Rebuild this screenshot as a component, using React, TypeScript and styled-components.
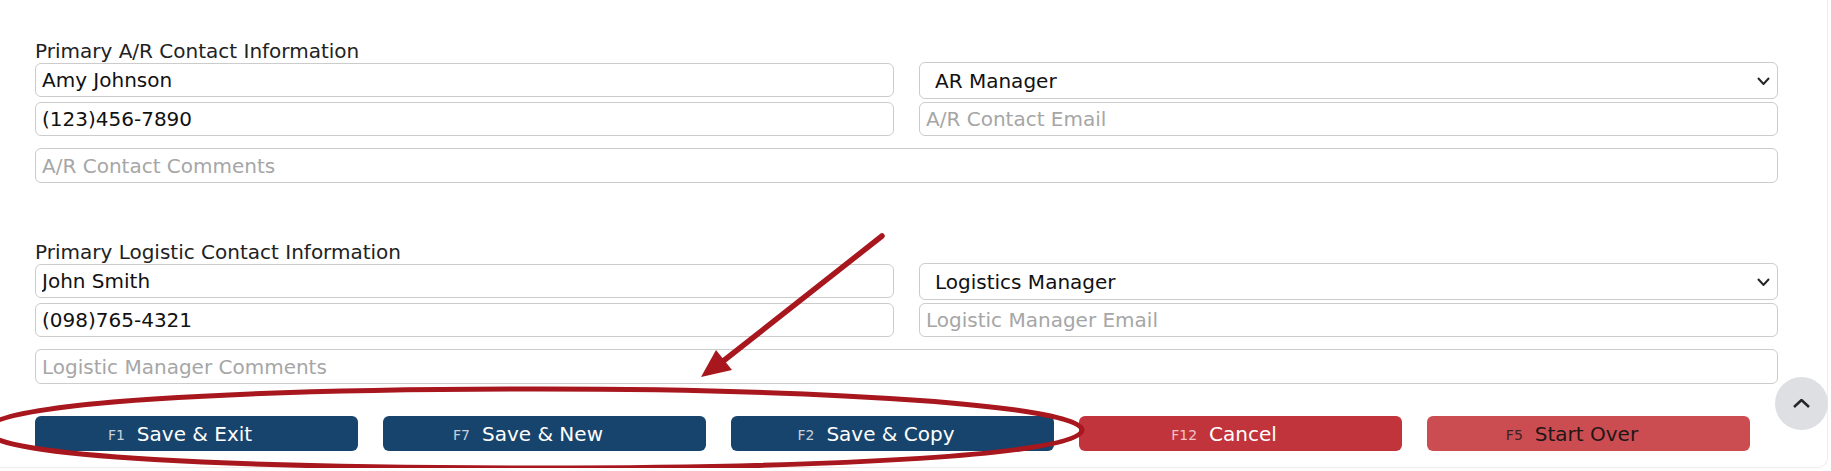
import { FC } from "react";
import styled, { createGlobalStyle } from "styled-components";

// ----------------------------------------------------------------------------

const GlobalStyle = createGlobalStyle`
  html, body {
    margin: 0;
    padding: 0;
    background: #ffffff;
    overflow: hidden;
  }
  body {
    font-family: "DejaVu Sans", Verdana, "Liberation Sans", sans-serif;
    color: #1a1a1a;
  }
`;

const FONT_SIZE = "20px";

// ----------------------------------------------------------------------------

const Page = styled.div`
  position: relative;
  box-sizing: border-box;
  width: 1828px;
  height: 468px;
  padding: 40px 49px 0 35px;
  border-right: 1px solid #f4ebe9;
  border-bottom: 1px solid #f4ebe9;
  border-bottom-right-radius: 10px;
`;

const Section = styled.section<{ $gapAfter: number }>`
  display: flex;
  flex-direction: column;
  margin-bottom: ${({ $gapAfter }) => $gapAfter}px;
`;

const SectionLabel = styled.div`
  font-size: ${FONT_SIZE};
  line-height: 22px;
  color: #222222;
`;

const FieldGrid = styled.div`
  display: grid;
  grid-template-columns: 1fr 1fr;
  column-gap: 25px;
  row-gap: 3px;
  align-items: start;
`;

const TextInput = styled.input<{ $offset?: number }>`
  box-sizing: border-box;
  width: 100%;
  height: 34px;
  margin: ${({ $offset }) => $offset ?? 0}px 0 0 0;
  padding: 0 6px;
  border: 1px solid #cccccc;
  border-radius: 6px;
  background: #ffffff;
  font-family: inherit;
  font-size: ${FONT_SIZE};
  color: #111111;
  outline: none;

  &::placeholder {
    color: #a6a6a6;
  }
`;

const CommentInput = styled(TextInput)`
  height: 35px;
  margin-top: 12px;
`;

const SelectWrap = styled.div`
  position: relative;
  height: 37px;

  svg {
    position: absolute;
    right: 8px;
    top: 15px;
    pointer-events: none;
  }
`;

const Select = styled.select`
  box-sizing: border-box;
  width: 100%;
  height: 37px;
  padding: 0 40px 0 15px;
  border: 1px solid #cccccc;
  border-radius: 6px;
  background: #ffffff;
  appearance: none;
  font-family: inherit;
  font-size: ${FONT_SIZE};
  color: #111111;
  outline: none;
`;

const ButtonRow = styled.div`
  display: flex;
  gap: 25px;
`;

type Tone = "primary" | "danger" | "muted";

const toneColors: Record<Tone, { bg: string; fg: string; key: string }> = {
  primary: { bg: "#17446c", fg: "#ffffff", key: "#c8d0da" },
  danger: { bg: "#c2343b", fg: "#ffffff", key: "#efc3c5" },
  muted: { bg: "#cb4d51", fg: "#1e1617", key: "#3b2224" },
};

const ActionButton = styled.button<{ $tone: Tone }>`
  box-sizing: border-box;
  width: 323px;
  height: 35px;
  display: flex;
  align-items: center;
  justify-content: center;
  gap: 12px;
  padding: 0 33px 0 0;
  border: none;
  border-radius: 6px;
  background: ${({ $tone }) => toneColors[$tone].bg};
  color: ${({ $tone }) => toneColors[$tone].fg};
  font-family: inherit;
  font-size: ${FONT_SIZE};
  cursor: pointer;

  .key {
    font-size: 14px;
    margin-top: 3px;
    color: ${({ $tone }) => toneColors[$tone].key};
  }
`;

const ScrollTop = styled.button`
  position: absolute;
  left: 1775px;
  top: 377px;
  width: 53px;
  height: 53px;
  border: none;
  border-radius: 50%;
  background: #dddfe3;
  display: flex;
  align-items: center;
  justify-content: center;
  padding: 0;
`;

const Annotation = styled.svg`
  position: absolute;
  left: 0;
  top: 0;
  pointer-events: none;
`;

// ----------------------------------------------------------------------------

const Chevron: FC<{ up?: boolean; w: number; h: number; stroke: number }> = ({
  up,
  w,
  h,
  stroke,
}) => (
  <svg width={w} height={h} viewBox={`0 0 ${w} ${h}`}>
    <polyline
      points={
        up
          ? `1,${h - 1} ${w / 2},1 ${w - 1},${h - 1}`
          : `1,1 ${w / 2},${h - 1} ${w - 1},1`
      }
      fill="none"
      stroke="#262626"
      strokeWidth={stroke}
    />
  </svg>
);

interface ContactBlockProps {
  title: string;
  name: string;
  role: string;
  phone: string;
  emailPlaceholder: string;
  commentsPlaceholder: string;
  gapAfter: number;
}

const ContactBlock: FC<ContactBlockProps> = (props) => {
  const { title, name, role, phone, emailPlaceholder, commentsPlaceholder, gapAfter } =
    props;

  return (
    <Section $gapAfter={gapAfter}>
      <SectionLabel>{title}</SectionLabel>
      <FieldGrid>
        <TextInput $offset={1} defaultValue={name} />
        <SelectWrap>
          <Select defaultValue={role}>
            <option>{role}</option>
          </Select>
          <Chevron w={13} h={8} stroke={2} />
        </SelectWrap>
        <TextInput defaultValue={phone} />
        <TextInput placeholder={emailPlaceholder} />
      </FieldGrid>
      <CommentInput placeholder={commentsPlaceholder} />
    </Section>
  );
};

const actions: { key: string; label: string; tone: Tone }[] = [
  { key: "F1", label: "Save & Exit", tone: "primary" },
  { key: "F7", label: "Save & New", tone: "primary" },
  { key: "F2", label: "Save & Copy", tone: "primary" },
  { key: "F12", label: "Cancel", tone: "danger" },
  { key: "F5", label: "Start Over", tone: "muted" },
];

const App: FC = () => {
  return (
    <>
      <GlobalStyle />
      <Page>
        <ContactBlock
          title="Primary A/R Contact Information"
          name="Amy Johnson"
          role="AR Manager"
          phone="(123)456-7890"
          emailPlaceholder="A/R Contact Email"
          commentsPlaceholder="A/R Contact Comments"
          gapAfter={58}
        />
        <ContactBlock
          title="Primary Logistic Contact Information"
          name="John Smith"
          role="Logistics Manager"
          phone="(098)765-4321"
          emailPlaceholder="Logistic Manager Email"
          commentsPlaceholder="Logistic Manager Comments"
          gapAfter={32}
        />
        <ButtonRow>
          {actions.map((a) => (
            <ActionButton key={a.key} $tone={a.tone}>
              <span className="key">{a.key}</span>
              <span>{a.label}</span>
            </ActionButton>
          ))}
        </ButtonRow>

        <ScrollTop aria-label="Back to top">
          <Chevron up w={17} h={9} stroke={2.5} />
        </ScrollTop>

        <Annotation width={1831} height={471} viewBox="0 0 1831 471">
          <path
            d="M -14 430 C -14 402, 250 389, 540 389 C 830 389, 1082 406, 1082 430 C 1082 455, 830 468, 540 468 C 250 468, -14 458, -14 430 Z"
            fill="none"
            stroke="#a8161e"
            strokeWidth={5}
          />
          <line
            x1={882}
            y1={236}
            x2={722}
            y2={362}
            stroke="#a8161e"
            strokeWidth={5.5}
            strokeLinecap="round"
          />
          <polygon points="701,377 716,350 732,370" fill="#a8161e" />
        </Annotation>
      </Page>
    </>
  );
};

export default App;
